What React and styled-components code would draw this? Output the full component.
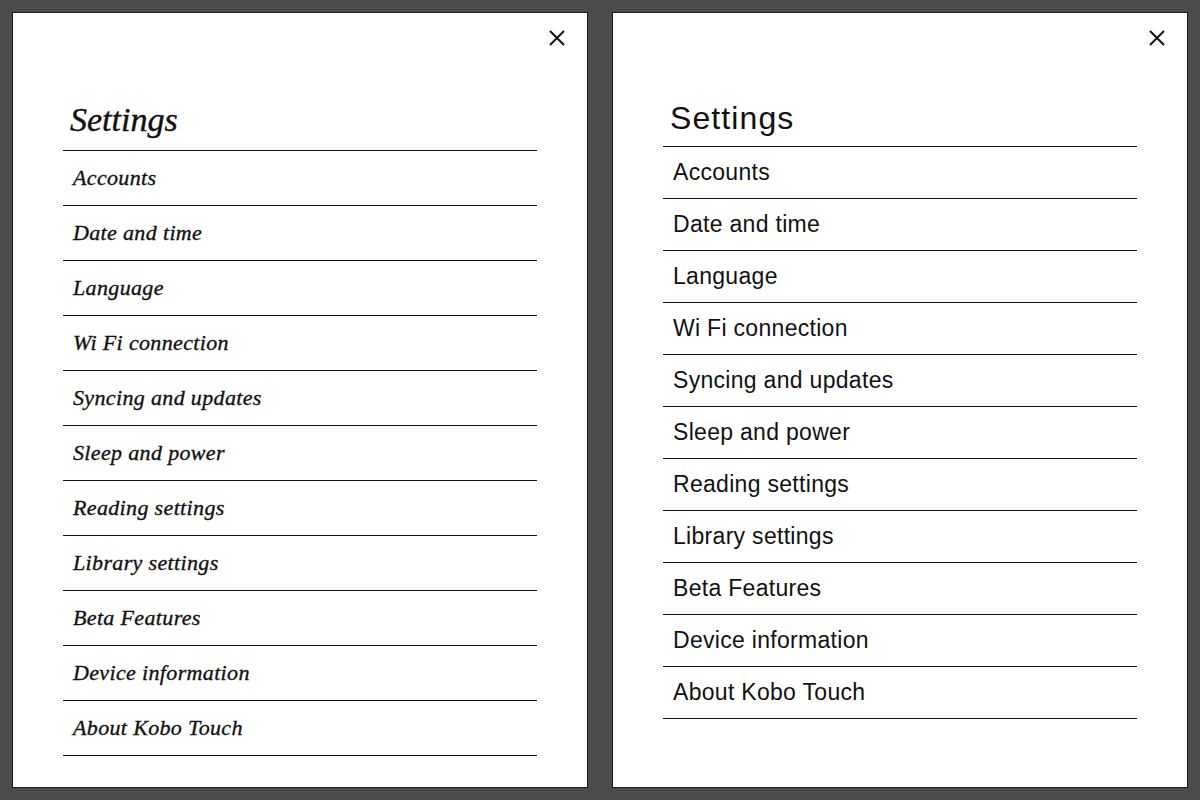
import React from 'react'
import styled, { createGlobalStyle } from 'styled-components'

const GlobalStyle = createGlobalStyle`
  html, body {
    margin: 0;
    padding: 0;
    background: #4b4d4a;
  }
`

const Screen = styled.div`
  width: 1200px;
  height: 800px;
  box-sizing: border-box;
  padding: 12px;
  display: grid;
  grid-template-columns: 1fr 1fr;
  gap: 24px;
  background: #4b4d4a;
`

const Panel = styled.div`
  background: #fff;
  border: 1px solid #1c1c1c;
  display: flex;
  flex-direction: column;
  color: #111;
`

const TopBar = styled.div`
  display: flex;
  justify-content: flex-end;
  padding: 13px 18px 0;
`

const CloseButton = styled.button`
  width: 24px;
  height: 24px;
  padding: 0;
  border: none;
  background: none;
  display: flex;
  align-items: center;
  justify-content: center;
  cursor: pointer;
`

const Content = styled.div`
  padding: 0 50px;
  margin-top: ${(p) => (p.$serif ? 50 : 48)}px;
`

const Title = styled.h1`
  margin: 0;
  font-weight: normal;
  line-height: 40px;
  padding: 0 0 ${(p) => (p.$serif ? 10 : 8)}px 7px;
  border-bottom: 1px solid #111;
  font-family: ${(p) => (p.$serif ? '"Liberation Serif", serif' : '"Liberation Sans", sans-serif')};
  font-style: ${(p) => (p.$serif ? 'italic' : 'normal')};
  font-size: ${(p) => (p.$serif ? 34 : 32)}px;
  letter-spacing: ${(p) => (p.$serif ? 0 : 1.1)}px;
  -webkit-text-stroke: ${(p) => (p.$serif ? '0.4px #111' : '0')};
`

const List = styled.ul`
  list-style: none;
  margin: 0;
  padding: 0;
`

const Item = styled.li`
  padding-left: 10px;
  border-bottom: 1px solid #111;
  height: ${(p) => (p.$serif ? 54 : 51)}px;
  line-height: ${(p) => (p.$serif ? 54 : 51)}px;
  font-family: ${(p) => (p.$serif ? '"Liberation Serif", serif' : '"Liberation Sans", sans-serif')};
  font-style: ${(p) => (p.$serif ? 'italic' : 'normal')};
  font-size: ${(p) => (p.$serif ? 22 : 23)}px;
  letter-spacing: ${(p) => (p.$serif ? 0.35 : 0.3)}px;
  -webkit-text-stroke: ${(p) => (p.$serif ? '0.35px #111' : '0')};
  cursor: pointer;
`

const items = [
  'Accounts',
  'Date and time',
  'Language',
  'Wi Fi connection',
  'Syncing and updates',
  'Sleep and power',
  'Reading settings',
  'Library settings',
  'Beta Features',
  'Device information',
  'About Kobo Touch'
]

const CloseIcon = () => (
  <svg width='18' height='18' viewBox='0 0 18 18'>
    <path d='M2 2 L16 16 M16 2 L2 16' stroke='#111' strokeWidth='2' fill='none' />
  </svg>
)

const SettingsPanel = ({ serif }) => (
  <Panel>
    <TopBar>
      <CloseButton aria-label='Close'>
        <CloseIcon />
      </CloseButton>
    </TopBar>
    <Content $serif={serif}>
      <Title $serif={serif}>{'Settings'}</Title>
      <List>
        {items.map((name) => (
          <Item key={name} $serif={serif}>
            {name}
          </Item>
        ))}
      </List>
    </Content>
  </Panel>
)

const App = () => (
  <>
    <GlobalStyle />
    <Screen>
      <SettingsPanel serif />
      <SettingsPanel />
    </Screen>
  </>
)

export default App
